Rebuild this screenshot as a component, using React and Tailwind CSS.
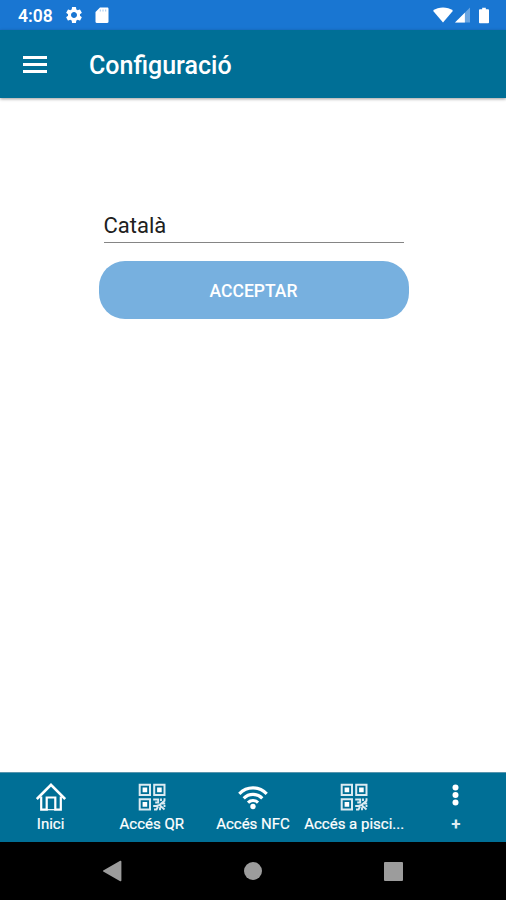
import React from 'react';
import { MdSettings } from 'react-icons/md';

// Status bar
function StatusBar() {
  return (
    <header className="h-[30px] shrink-0 bg-[#1976d2] flex items-center justify-between pl-[18px] pr-[17px] text-white">
      <div className="flex items-center">
        <span className="w-[46px] text-[17.5px] leading-[30px] font-semibold pt-[2px]">4:08</span>
        <MdSettings className="w-[20px] h-[20px]" />
        <svg className="ml-[11px] w-[14px] h-[17px]" viewBox="0 0 14 17" fill="currentColor">
          <path d="M5 0.500h7.300c.7 0 1.200.5 1.200 1.200v13.100c0 .7-.5 1.200-1.200 1.200H1.700C1 16 .5 15.500.5 14.800V5z" />
          <path d="M5.300 2.500v2M8 2.500v2M10.700 2.500v2" stroke="#1976d2" strokeWidth="1" opacity="0.4" />
        </svg>
      </div>
      <div className="flex items-center">
        <svg className="w-[20px] h-[16px]" viewBox="0 0 20 16" fill="currentColor">
          <path d="M0 3.800C5.500-.6 14.500-.6 20 3.800L10 15.500z" />
        </svg>
        <svg className="ml-[2px] w-[15px] h-[16px]" viewBox="0 0 16 16" fill="currentColor">
          <path d="M16 0v16H0z" opacity="0.35" />
          <path d="M10.500 5.500v10.500H0z" />
        </svg>
        <svg className="ml-[9px] w-[10px] h-[17px]" viewBox="0 0 11 17" fill="currentColor">
          <path d="M3.500 0h4v1.500h2.300c.7 0 1.200.5 1.200 1.200v13.100c0 .7-.5 1.200-1.200 1.200H1.200C.5 17 0 16.500 0 15.800V2.700c0-.7.5-1.200 1.200-1.200h2.300z" />
        </svg>
      </div>
    </header>
  );
}

function Toolbar({ title }) {
  return (
    <div className="h-[68px] shrink-0 bg-[#006f96] flex items-center pl-[23px] shadow-[0_1px_3px_rgba(0,0,0,0.4)]">
      <button className="w-6 flex flex-col gap-[4px]" aria-label="Menu">
        <span className="h-[3px] bg-white"></span>
        <span className="h-[3px] bg-white"></span>
        <span className="h-[3px] bg-white"></span>
      </button>
      <h1 className="ml-[42px] pt-[4px] text-[25px] font-medium text-white">{title}</h1>
    </div>
  );
}

// Tab icons
function HomeIcon() {
  return (
    <svg className="w-[30px] h-[28px]" viewBox="0 0 30 28" fill="none" stroke="white" strokeWidth="2.200">
      <path d="M.8 16L15 1.900l14.200 14.100" strokeWidth="2.700" />
      <path d="M5.200 13.500v13.200h5.500V14.500h8.600v12.200h5.500V13.500" />
      <path d="M10.700 26.700h8.600" strokeWidth="1.200" />
    </svg>
  );
}

function QrIcon() {
  return (
    <svg className="w-[28px] h-[28px]" viewBox="0 0 28 28" fill="none" stroke="#dcebf2" strokeWidth="2">
      <path d="M1.700 1.700h10.300v10.300H1.700zM16.200 1.700h10.300v10.300H16.200zM1.700 16.200h10.300v10.300H1.700z" />
      <path d="M4.600 4.600h4.600v4.600H4.600zM19.100 4.600h4.600v4.600h-4.600zM4.600 19.100h4.600v4.600H4.600z" fill="#fff" stroke="none" />
      <path d="M15.200 16.500h5v3h-3M26.500 15.200v2.500l-5 4.300-3 1h-3.300M23 15.500v2.500M23 20.500h4.200M22 22.500l4.500 4M16 26.500h2.500l1.500-3M22 27.200v-3M26.500 22v2" strokeWidth="1.900" />
    </svg>
  );
}

function WifiIcon() {
  return (
    <svg className="w-[30px] h-[28px]" viewBox="0 0 30 28" fill="none" stroke="white" strokeWidth="3.200">
      <path d="M1.300 10.800C9 3 21 3 28.700 10.800M5.700 15.300c5.300-5.200 13.300-5.200 18.600 0M10 19.600c2.900-2.700 7.100-2.700 10 0" />
      <circle cx="15" cy="23.500" r="2.700" fill="white" stroke="none" />
    </svg>
  );
}

function MoreIcon() {
  return (
    <svg className="w-[8px] h-[28px]" viewBox="0 0 8 28" fill="white">
      <circle cx="4.500" cy="4.500" r="3" />
      <circle cx="4.500" cy="12" r="3" />
      <circle cx="4.500" cy="19.500" r="3" />
    </svg>
  );
}

function PlusLabel() {
  return <span className="text-[17px] leading-[18px] mt-[4px] ml-px font-bold text-[#dcebf2]">+</span>;
}

const tabs = [
  { label: 'Inici', icon: HomeIcon },
  { label: 'Accés QR', icon: QrIcon },
  { label: 'Accés NFC', icon: WifiIcon },
  { label: 'Accés a pisci...', icon: QrIcon },
  { label: '+', icon: MoreIcon },
];

function TabBar() {
  return (
    <nav className="h-[70px] shrink-0 bg-[#006f96] grid grid-cols-5 border-t border-[#5795ae]">
      {tabs.map(({ label, icon: Icon }) => (
        <button key={label} className="flex flex-col items-center pt-[10px] text-white">
          <Icon />
          {label === '+' ? (
            <PlusLabel />
          ) : (
            <span className="text-[15px] leading-[18px] mt-[4px] whitespace-nowrap [-webkit-text-stroke:0.2px_white]">
              {label}
            </span>
          )}
        </button>
      ))}
    </nav>
  );
}

// Android system navigation
function SystemNav() {
  return (
    <div className="h-[58px] shrink-0 bg-black flex items-center pl-[102px] text-[#9c9c9c]">
      <svg className="w-[20px] h-[22px]" viewBox="0 0 20 22" fill="currentColor">
        <path d="M18.200.8c.5-.3 1.200 0 1.200.7v19c0 .7-.7 1-1.200.7L1.200 11.500c-.4-.2-.4-.8 0-1z" />
      </svg>
      <span className="ml-[122px] w-[18px] h-[18px] rounded-full bg-[#9c9c9c]"></span>
      <span className="ml-[122px] w-[19px] h-[19px] rounded-[1px] bg-[#9c9c9c]"></span>
    </div>
  );
}

function App() {
  return (
    <div className="h-screen flex flex-col bg-white font-[Roboto,sans-serif] overflow-hidden">
      <StatusBar />
      <Toolbar title="Configuració" />
      <main className="flex-1 flex flex-col items-center pl-px pt-[110px]">
        <div className="w-[300px] h-[35px] border-b border-[#858585] text-[22px] leading-[36px] text-[#202020]">
          Català
        </div>
        <button className="mt-[18px] w-[310px] h-[58px] rounded-[26px] bg-[#77b0df] text-white text-[17.5px] font-medium pt-[2px]">
          ACCEPTAR
        </button>
      </main>
      <TabBar />
      <SystemNav />
    </div>
  );
}

export default App;
